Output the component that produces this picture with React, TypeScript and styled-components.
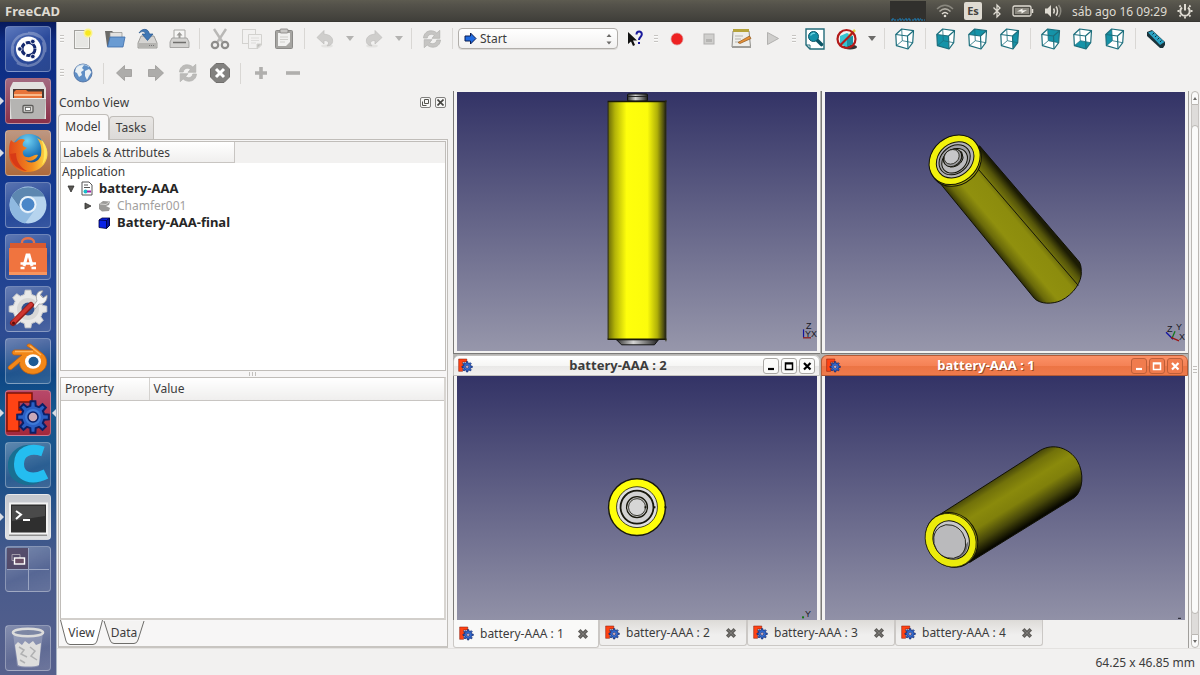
import React from "react";
import styled, { createGlobalStyle, css } from "styled-components";

const GlobalStyle = createGlobalStyle`
  * { box-sizing: border-box; }
  body {
    margin: 0;
    background: #f2f1f0;
    color: #3c3c3c;
    font-family: "Noto Sans", "Open Sans", sans-serif;
    font-size: 12px;
    line-height: 17px;
  }
  button, select { font: inherit; color: inherit; }
  svg { display: block; }
`;

const Page = styled.div`
  min-height: 100vh;
  display: flex;
  flex-direction: column;
`;

/* ---------- desktop bar ---------- */

const TopBar = styled.header`
  height: 22px;
  padding: 0 7px 0 5px;
  display: flex;
  align-items: center;
  gap: 10px;
  color: #dfdbd2;
  background: linear-gradient(#5d5b50, #55534b 20%, #403f3a 94%, #33322e);
`;

const AppName = styled.strong`
  flex: 1;
  font-size: 13px;
`;

const LoadGraph = styled.div`
  width: 36px;
  height: 20px;
  display: flex;
  align-items: flex-end;
  background: #31302d;
`;

const Keyboard = styled.span`
  width: 18px;
  height: 18px;
  border-radius: 2px;
  background: #dfdbd2;
  color: #45443f;
  font-size: 11px;
  font-weight: 700;
  text-align: center;
`;

/* ---------- launcher ---------- */

const Desktop = styled.div`
  flex: 1;
  display: flex;
`;

const Launcher = styled.nav`
  flex: none;
  width: 57px;
  padding: 4px 5px;
  display: flex;
  flex-direction: column;
  gap: 6px;
  border-right: 1px solid #a9b4c4;
  background: linear-gradient(#071a5c, #0d2c82 3%, #153b92 30%, #2e4c92 48%, #0d4684 54%, #17598f 60%, #1a4f88 70%, #475a8c 82%, #56608c);
`;

const Tile = styled.button<{ $tint?: string; $last?: boolean }>`
  position: relative;
  width: 46px;
  height: 46px;
  padding: 0;
  border: 1px solid rgba(255, 255, 255, 0.28);
  border-radius: 4px;
  background: ${(p) => p.$tint ?? "linear-gradient(160deg, rgba(255,255,255,0.3), rgba(255,255,255,0.08) 60%, rgba(255,255,255,0.14))"};
  ${(p) => p.$last && css`margin-top: auto;`}
  & > svg { margin: -1px; }
`;

const Pip = styled.i<{ $side: "left" | "right" }>`
  position: absolute;
  top: 18px;
  border: 4px solid transparent;
  ${(p) => (p.$side === "left"
    ? css`left: -6px; border-left-color: #d8dce4; border-right-width: 0;`
    : css`right: -6px; border-right-color: #d8dce4; border-left-width: 0;`)}
`;

/* ---------- toolbars ---------- */

const Main = styled.main`
  flex: 1;
  min-width: 0;
  display: flex;
  flex-direction: column;
`;

const Toolbar = styled.div<{ $height: number }>`
  height: ${(p) => p.$height}px;
  display: flex;
  align-items: center;
`;

const ToolButton = styled.button`
  flex: none;
  width: 32px;
  height: 30px;
  padding: 0;
  border: 0;
  background: none;
  display: grid;
  place-items: center;
`;

const MenuArrow = styled.button<{ $dim?: boolean }>`
  flex: none;
  width: 17px;
  height: 30px;
  padding: 0;
  border: 0;
  background: none;
  display: grid;
  place-items: center;
  &::after {
    content: "";
    border: 4px solid transparent;
    border-top: 5px solid ${(p) => (p.$dim ? "#b4b3b1" : "#6c6b69")};
    border-bottom-width: 0;
  }
`;

const Divider = styled.i`
  flex: none;
  width: 1px;
  height: 21px;
  margin: 0 4px;
  background: #d9d7d4;
`;

const Grip = styled.i`
  flex: none;
  width: 4px;
  height: 8px;
  margin: 0 3px;
  background: repeating-linear-gradient(#c6c4c1 0 1px, #fbfbfa 1px 2px, transparent 2px 3px);
`;

const Picker = styled.label`
  flex: none;
  width: 160px;
  height: 21px;
  margin: 0 1px;
  padding: 0 5px;
  display: flex;
  align-items: center;
  gap: 3px;
  border: 1px solid #b1aeaa;
  border-radius: 4px;
  background: linear-gradient(#ffffff, #f2f1f0);
  box-shadow: 0 1px 0 #dcdad7;
`;

const PickerSelect = styled.select`
  flex: 1;
  min-width: 0;
  padding: 0;
  border: 0;
  background: none;
  appearance: none;
`;

/* ---------- combo view ---------- */

const Workspace = styled.div`
  flex: 1;
  min-height: 0;
  display: flex;
`;

const Combo = styled.section`
  flex: none;
  width: 391px;
  padding-left: 1px;
  display: flex;
  flex-direction: column;
`;

const ComboHead = styled.header`
  height: 23px;
  padding: 0 2px 0 1px;
  display: flex;
  align-items: center;
  gap: 4px;
`;

const ComboTitle = styled.h1`
  flex: 1;
  margin: 0;
  font-size: 12px;
  font-weight: 400;
`;

const DockButton = styled.button`
  width: 11px;
  height: 11px;
  padding: 1px;
  border: 1px solid #82817f;
  border-radius: 2px;
  background: #f7f7f6;
`;

const PanelTabs = styled.div`
  height: 25px;
  display: flex;
  align-items: flex-end;
`;

const PanelTab = styled.button<{ $active?: boolean }>`
  width: ${(p) => (p.$active ? 51 : 45)}px;
  height: ${(p) => (p.$active ? 26 : 23)}px;
  padding: 0 1px 2px 0;
  border: 1px solid #c0bdb9;
  border-bottom: 0;
  border-radius: 4px 4px 0 0;
  background: ${(p) => (p.$active ? "#f9f8f8" : "linear-gradient(#e8e6e4, #dcdad8)")};
  position: relative;
  z-index: ${(p) => (p.$active ? 1 : 0)};
  margin-bottom: ${(p) => (p.$active ? -1 : 0)}px;
`;

const PanelFrame = styled.div`
  flex: 1;
  padding: 1px 1px 0;
  display: flex;
  flex-direction: column;
  border: 1px solid #c0bdb9;
  border-bottom: 2px solid #c8c5c1;
  background: #f7f6f6;
`;

const TreeBox = styled.div`
  flex: 230 1 0;
  border: 1px solid #c0bdb9;
  background: #ffffff;
`;

const HeaderStrip = styled.div`
  height: 21px;
  background: #f2f1f0;
`;

const TreeHeader = styled.div`
  width: 174px;
  height: 21px;
  padding: 2px;
  border-right: 1px solid #c8c5c2;
  border-bottom: 1px solid #c8c5c2;
  background: linear-gradient(#ffffff, #f0efee);
`;

const Tree = styled.ul`
  margin: 0;
  padding: 0 1px;
  list-style: none;
`;

const TreeRow = styled.li<{ $depth: number; $tone?: "bold" | "dim" }>`
  height: 17px;
  padding-left: ${(p) => (p.$depth === 0 ? 0 : p.$depth * 17 - 12)}px;
  display: flex;
  align-items: center;
  gap: 6px;
  font-size: ${(p) => (p.$tone === "bold" ? 13 : 12)}px;
  font-weight: ${(p) => (p.$tone === "bold" ? 700 : 400)};
  color: ${(p) => (p.$tone === "dim" ? "#a2a09e" : p.$tone === "bold" ? "#262626" : "#3c3c3c")};
`;

const Splitter = styled.div`
  height: 6px;
  display: grid;
  place-items: center;
  &::after {
    content: "";
    width: 8px;
    height: 4px;
    background: repeating-linear-gradient(90deg, #c2c0bd 0 1px, transparent 1px 3px);
  }
`;

const PropertyBox = styled.div`
  flex: 243 1 0;
  border: 1px solid #c0bdb9;
  border-right: 2px solid #d8d5d1;
  border-bottom: 2px solid #d2cfcb;
  background: #ffffff;
`;

const PropertyTable = styled.table`
  width: 100%;
  border-collapse: collapse;
  th {
    height: 23px;
    padding: 0 4px;
    border-bottom: 1px solid #c8c5c2;
    background: linear-gradient(#ffffff, #efeeed);
    font-weight: 400;
    text-align: left;
  }
  th:first-child {
    width: 88px;
    border-right: 1px solid #d4d2cf;
  }
`;

const FootTabs = styled.div`
  height: 26px;
  display: flex;
`;

const FootTab = styled.button<{ $width: number }>`
  width: ${(p) => p.$width}px;
  height: 25px;
  padding: 0 0 1px;
  border: 0;
  background: none;
  position: relative;
  & > svg { position: absolute; inset: 0; }
  & > span { position: relative; }
`;

/* ---------- document windows ---------- */

const Documents = styled.section`
  flex: 1;
  min-width: 0;
  margin-left: 5px;
  display: flex;
`;

const DocumentArea = styled.div`
  flex: 1;
  min-width: 0;
  display: flex;
  flex-direction: column;
`;

const WindowGrid = styled.div`
  flex: 1;
  display: grid;
  grid-template-columns: 1fr 1fr;
  grid-template-rows: minmax(0, 263fr) minmax(0, 265fr);
  column-gap: 1px;
  row-gap: 1px;
  background: #b5b4b2;
`;

const DocWindow = styled.article<{ $titled?: boolean }>`
  min-width: 0;
  display: flex;
  flex-direction: column;
  border: solid #7b7a78;
  border-width: 0 0 ${(p) => (p.$titled ? 0 : 1)}px 1px;
  border-radius: ${(p) => (p.$titled ? "6px 6px 0 0" : "0")};
  background: #f4f3f2;
  padding: ${(p) => (p.$titled ? "0" : "1px 0 2px")};
`;

const TitleBar = styled.header<{ $active?: boolean }>`
  flex: none;
  height: 21px;
  margin-left: -1px;
  padding: 0 4px;
  display: flex;
  align-items: center;
  gap: 2px;
  border: 1px solid ${(p) => (p.$active ? "#b45a35" : "#c4c2bf")};
  border-radius: 6px 6px 0 0;
  color: ${(p) => (p.$active ? "#ffffff" : "#3c3c3c")};
  text-shadow: ${(p) => (p.$active ? "1px 1px 0 #9c4a26" : "none")};
  background: ${(p) => (p.$active
    ? "linear-gradient(#fb9166, #f58256 50%, #ec7444 52%, #ee7a4c)"
    : "linear-gradient(#ffffff, #f6f6f5 50%, #e9e8e7 52%, #f2f1f0)")};
`;

const WindowTitle = styled.h2`
  flex: 1;
  margin: 0;
  font-size: 13px;
  font-weight: 700;
  text-align: center;
`;

const FrameButton = styled.button<{ $active?: boolean }>`
  width: 16px;
  height: 16px;
  padding: 0;
  display: grid;
  place-items: center;
  border: 1px solid ${(p) => (p.$active ? "#bd5f39" : "#aaa8a5")};
  border-radius: 3px;
  background: ${(p) => (p.$active ? "#f07c4e" : "#fbfbfa")};
  color: ${(p) => (p.$active ? "#ffffff" : "#000000")};
`;

const Viewport = styled.div`
  flex: 1 1 0px;
  min-height: 0;
  contain: size;
  margin: 0 3px;
  overflow: hidden;
  background: linear-gradient(#333366, #9797ab) 0 0 / 100% 260px no-repeat, #9797ab;
  & > svg { width: 100%; height: 260px; }
`;

const DocTabs = styled.div`
  height: 28px;
  display: flex;
  align-items: flex-start;
`;

const DocTab = styled.div<{ $active?: boolean }>`
  flex: none;
  width: ${(p) => (p.$active ? 146 : 148)}px;
  height: ${(p) => (p.$active ? 28 : 26)}px;
  padding: 0 9px 0 5px;
  display: flex;
  align-items: center;
  gap: 6px;
  border: 1px solid #cbc8c5;
  border-top: 0;
  border-radius: 0 0 3px 3px;
  background: ${(p) => (p.$active ? "#f9f9f8" : "linear-gradient(#dddbd8, #f0efee 60%)")};
`;

const DocTabName = styled.button`
  flex: 1;
  padding: 0;
  border: 0;
  background: none;
  text-align: left;
  white-space: nowrap;
`;

const CloseButton = styled.button`
  width: 12px;
  height: 12px;
  padding: 0;
  border: 0;
  background: none;
`;

const ScrollBar = styled.div`
  flex: none;
  width: 12px;
  padding: 0 1px 0 2px;
  display: flex;
  flex-direction: column;
  border-left: 1px solid #a09e9b;
  background: #f2f1f0;
`;

const ScrollStep = styled.button<{ $down?: boolean }>`
  height: 14px;
  padding: 0;
  display: grid;
  place-items: center;
  border: 1px solid #bab7b3;
  border-radius: ${(p) => (p.$down ? "0 0 5px 5px" : "5px 5px 0 0")};
  background: #fafafa;
  &::after {
    content: "";
    border: 2px solid transparent;
    border-${(p) => (p.$down ? "top" : "bottom")}: 3px solid #6c6b69;
    border-${(p) => (p.$down ? "bottom" : "top")}-width: 0;
  }
`;

const ScrollTrack = styled.div`
  flex: 1;
  padding: 20px 0;
  display: flex;
  border: solid #c6c3c0;
  border-width: 0 1px;
  background: #dedcda;
`;

const ScrollThumb = styled.div`
  flex: 1;
  margin: 0 -1px;
  display: grid;
  place-items: center;
  border: 1px solid #bab7b3;
  border-radius: 5px;
  background: #fafaf9;
  &::after {
    content: "";
    width: 4px;
    height: 8px;
    background: repeating-linear-gradient(#c2c0bd 0 1px, transparent 1px 3px);
  }
`;

const StatusBar = styled.footer`
  height: 27px;
  padding: 5px 5px 0 0;
  border-top: 1px solid #e4e2e0;
  text-align: right;
`;

/* ---------- shared drawings ---------- */

function gear(cx: number, cy: number, outer: number, inner: number, teeth: number) {
  const pts: string[] = [];
  const step = (Math.PI * 2) / teeth;
  for (let i = 0; i < teeth; i++) {
    const a = i * step - Math.PI / 2;
    [[-0.3, inner], [-0.19, outer], [0.19, outer], [0.3, inner]].forEach(([f, r]) => {
      pts.push(`${(cx + r * Math.cos(a + f * step)).toFixed(2)} ${(cy + r * Math.sin(a + f * step)).toFixed(2)}`);
    });
  }
  return `M${pts.join("L")}Z`;
}

const FreeCadMark = ({ size }: { size: number }) => (
  <svg width={size} height={size} viewBox="0 0 46 46">
    <path d="M2 3H27V12H14V20H22V28H14V41H2Z" fill="#ff4314" stroke="#7c1408" strokeWidth="1.5" />
    <path d={gear(28, 27, 16, 11.5, 8)} fill="#2a5fc4" stroke="#0b1f66" strokeWidth="2" />
    <circle cx="28" cy="27" r="8" fill="#3f7ad8" />
    <circle cx="28" cy="27" r="5" fill="#c9a9b8" stroke="#0b1f66" strokeWidth="1.5" />
  </svg>
);

const CROSS = (
  <svg width="12" height="12" viewBox="0 0 12 12">
    <path d="M2.2 2.2L9.8 9.8M9.8 2.2L2.2 9.8" stroke="#62605d" strokeWidth="3.6" />
    <path d="M3 3L9 9M9 3L3 9" stroke="#7b7976" strokeWidth="1" />
  </svg>
);

const VERT: Record<string, [number, number]> = {
  a: [6.7, 1], b: [18.5, 2.7], c: [12.5, 8], d: [0.8, 6.5],
  e: [7.3, 12.7], f: [17.7, 14.7], g: [13, 21], h: [1.4, 17.7],
};
const face = (keys: string) => keys.split("").map((k) => VERT[k].join(",")).join(" ");

const Cube = ({ fill }: { fill?: string }) => (
  <svg width="20" height="22" viewBox="0 0 20 22" fill="none" stroke="#1d6f7d" strokeLinejoin="round">
    <polygon points="6.7,1 18.5,2.7 17.7,14.7 13,21 1.4,17.7 0.8,6.5" fill="#ffffff" stroke="none" />
    {fill && <polygon points={face(fill)} fill="#1593a8" stroke="none" />}
    <path d="M6.7 1L7.3 12.7L17.7 14.7M7.3 12.7L1.4 17.7" strokeWidth="0.8" />
    <polygon points={face("abfghd")} strokeWidth="1.2" />
    <path d="M0.8 6.5L12.5 8L18.5 2.7M12.5 8L13 21" strokeWidth="1.2" />
  </svg>
);

const Swirl = ({ tone }: { tone: string }) => (
  <svg width="20" height="20" viewBox="0 0 20 20" fill={tone} stroke="#b2b1af" strokeWidth="0.7">
    <path d="M1.5 9C1.8 4.500 5 1.800 9 1.800C11.500 1.800 13.300 2.600 14.800 4L17.800 1.300V9.300H10L12.400 6.400C10 4.400 6 5 5.200 9Z" />
    <path d="M18.500 11C18.200 15.500 15 18.200 11 18.200C8.500 18.200 6.700 17.400 5.200 16L2.200 18.700V10.700H10L7.600 13.600C10 15.600 14 15 14.800 11Z" />
  </svg>
);

const BentArrow = ({ flip }: { flip?: boolean }) => (
  <svg width="20" height="20" viewBox="0 0 20 20">
    <g transform={flip ? "translate(20 0) scale(-1 1)" : undefined}>
      <ellipse cx="12" cy="17" rx="6" ry="1.6" fill="#e4e3e1" />
      <path d="M2 8.500L9 1.500V5.200C15 5.400 18 8.600 17.600 12.500C17.300 15.200 15.200 16.900 12 16.800C14.800 14.400 13.600 11.200 9 11.600V15Z" fill="#cfcecc" stroke="#bebdbb" strokeWidth="0.7" />
    </g>
  </svg>
);

const NavArrow = ({ flip }: { flip?: boolean }) => (
  <svg width="18" height="18" viewBox="0 0 18 18">
    <path transform={flip ? "translate(18 0) scale(-1 1)" : undefined} d="M1.500 9L9.500 1.500V5.500H16.500V12.500H9.500V16.500Z" fill="#adacaa" stroke="#9a9997" strokeWidth="0.8" />
  </svg>
);

/* ---------- battery models ---------- */

const AxisLabel = styled.text`
  font-family: "Liberation Sans", sans-serif;
  font-size: 9px;
  fill: #17171f;
`;

const Scene = ({ children }: { children: React.ReactNode }) => (
  <svg viewBox="0 0 361 260" preserveAspectRatio="xMidYMin meet">{children}</svg>
);

const FrontView = () => (
  <Scene>
    <defs>
      <linearGradient id="front-body">
        <stop offset="0" stopColor="#6a6a08" />
        <stop offset="0.12" stopColor="#b4b408" />
        <stop offset="0.32" stopColor="#ffff0c" />
        <stop offset="0.68" stopColor="#fcfc0c" />
        <stop offset="0.85" stopColor="#b0b008" />
        <stop offset="0.96" stopColor="#4c4c10" />
        <stop offset="1" stopColor="#1c1c14" />
      </linearGradient>
      <linearGradient id="front-metal">
        <stop offset="0" stopColor="#303030" />
        <stop offset="0.4" stopColor="#d4d4d4" />
        <stop offset="1" stopColor="#202020" />
      </linearGradient>
    </defs>
    <rect x="171" y="2" width="20" height="7" rx="1" fill="url(#front-metal)" stroke="#111" />
    <path d="M171 4.5H191" stroke="#222" />
    <path d="M160 248.500H202L198 253.500H165Z" fill="url(#front-metal)" stroke="#111" />
    <rect x="151.500" y="9.500" width="58" height="239" rx="1" fill="url(#front-body)" />
    <path d="M151 9.500H210M151 248H210" stroke="#1a1a08" strokeWidth="1.6" />
    <path d="M151.500 10V248M209.500 8V250" stroke="#2c2c10" />
    <path d="M347.500 238V246" stroke="#1414a0" strokeWidth="1.2" />
    <path d="M347 246.500H355" stroke="#8c1414" strokeWidth="1.2" />
    <AxisLabel x="350" y="238">Z</AxisLabel>
    <AxisLabel x="349" y="246">Y</AxisLabel>
    <AxisLabel x="355" y="246">X</AxisLabel>
  </Scene>
);

const TiltedTopView = () => (
  <Scene>
    <defs>
      <linearGradient id="tilt-body" gradientUnits="userSpaceOnUse" x1="163" y1="151" x2="205" y2="116">
        <stop offset="0" stopColor="#2a2a05" />
        <stop offset="0.14" stopColor="#6a6a0a" />
        <stop offset="0.32" stopColor="#90900e" />
        <stop offset="0.66" stopColor="#8c8c0d" />
        <stop offset="0.87" stopColor="#55550a" />
        <stop offset="1" stopColor="#1c1c04" />
      </linearGradient>
    </defs>
    <path d="M115 91L210 207C216 213 228 213 237 209C249 203 258 190 257 180C257 174 256 171 253 168L155 54Z" fill="url(#tilt-body)" stroke="#111106" />
    <path d="M152.500 76L254 194" stroke="#15150a" />
    <g stroke="#111106">
      <ellipse cx="131" cy="69.500" rx="27.300" ry="23.400" transform="rotate(-40 131 69.500)" fill="#a4a40a" />
      <ellipse cx="130" cy="68" rx="27.300" ry="23" transform="rotate(-40 130 68)" fill="#f2f20c" />
      <ellipse cx="130.500" cy="68" rx="20.300" ry="16.500" transform="rotate(-40 130.500 68)" fill="#b4b4b6" />
      <ellipse cx="130" cy="68" rx="17" ry="13.500" transform="rotate(-40 130 68)" fill="#a0a0a4" />
      <ellipse cx="130" cy="69" rx="14" ry="11" transform="rotate(-40 130 69)" fill="#bcbcbe" />
      <path d="M119.500 68L122 73C126 78 137 74 138.500 66L137 60Z" fill="#77777b" />
      <ellipse cx="128" cy="66" rx="10" ry="8" transform="rotate(-40 128 66)" fill="#9a9a9d" />
      <ellipse cx="127" cy="65" rx="8" ry="6.800" transform="rotate(-40 127 65)" fill="#c6c6c8" strokeWidth="0.7" />
    </g>
    <path d="M342 241L349 248" stroke="#1414a0" strokeWidth="1.3" />
    <path d="M348 247L351 240" stroke="#14781e" strokeWidth="1.3" />
    <path d="M347 246L355 249.500" stroke="#9c1414" strokeWidth="1.3" />
    <AxisLabel x="343" y="241">Z</AxisLabel>
    <AxisLabel x="352" y="239">Y</AxisLabel>
    <AxisLabel x="355" y="249">X</AxisLabel>
  </Scene>
);

const PoleView = () => (
  <Scene>
    <g stroke="#17170c">
      <circle cx="180.500" cy="131.500" r="28.500" fill="#ffff0a" strokeWidth="1.4" />
      <circle cx="180.500" cy="131.500" r="20.500" fill="#e0e0e0" strokeWidth="0.8" />
      <circle cx="180.500" cy="131.500" r="16.500" fill="#d2d2d2" strokeWidth="1.8" />
      <circle cx="180.500" cy="131.500" r="10.500" fill="#c2c2c2" strokeWidth="1.2" />
      <circle cx="180.500" cy="131.500" r="8.500" fill="#d6d6d6" strokeWidth="0.8" />
      <path d="M188 131.500H190M197 131.500H199M208 131.500H210" strokeWidth="2" />
    </g>
    <rect x="346" y="241" width="2" height="2" fill="#147814" />
    <AxisLabel x="349" y="242">Y</AxisLabel>
  </Scene>
);

const TiltedBaseView = () => (
  <Scene>
    <defs>
      <linearGradient id="base-body" gradientUnits="userSpaceOnUse" x1="167" y1="105" x2="197" y2="153">
        <stop offset="0" stopColor="#44440a" />
        <stop offset="0.14" stopColor="#72720a" />
        <stop offset="0.36" stopColor="#8a8a0c" />
        <stop offset="0.58" stopColor="#80800b" />
        <stop offset="0.8" stopColor="#48480a" />
        <stop offset="1" stopColor="#080800" />
      </linearGradient>
    </defs>
    <path d="M115 139L216 74.500C229 67 245 72 253 85C260 97 259 115 250 122L145 187Z" fill="url(#base-body)" stroke="#111106" />
    <g stroke="#111106">
      <ellipse cx="127" cy="164.300" rx="28.300" ry="25.300" transform="rotate(57 127 164.300)" fill="#8c8c0a" />
      <ellipse cx="126" cy="164.700" rx="27.800" ry="24.600" transform="rotate(57 126 164.700)" fill="#ebeb0b" strokeWidth="0.7" />
      <ellipse cx="126.500" cy="164.500" rx="20" ry="17.500" transform="rotate(57 126.500 164.500)" fill="#c8c8ca" />
      <path d="M125 184C136 185 144 177 143.500 166L139 172Z" fill="#707074" stroke="none" />
      <ellipse cx="125" cy="166" rx="17.500" ry="15.500" transform="rotate(57 125 166)" fill="#bababc" strokeWidth="0.8" />
    </g>
    <path d="M354 243H357" stroke="#17171f" />
  </Scene>
);

/* ---------- launcher artwork ---------- */

const art = {
  ubuntu: (
    <svg width="46" height="46" viewBox="0 0 46 46" fill="none">
      <path d="M8 30C3 12 20 2 35 11M38 16C44 32 28 46 12 37M23 7C34 6 42 14 40 26M22 39C12 39 6 30 8 20" stroke="#ffffff" strokeOpacity="0.28" strokeWidth="2.5" />
      <circle cx="23.500" cy="23" r="12.500" fill="#ffffff" />
      <circle cx="23.500" cy="23" r="6.500" stroke="#15296e" strokeWidth="3" strokeDasharray="12.200 1.400" />
      <g fill="#15296e" stroke="#ffffff" strokeWidth="0.8">
        <circle cx="14.800" cy="23" r="2.300" /><circle cx="27.800" cy="15.500" r="2.300" /><circle cx="27.800" cy="30.500" r="2.300" />
      </g>
    </svg>
  ),
  files: (
    <svg width="46" height="46" viewBox="0 0 46 46">
      <path d="M8 4H38L41 10V41H5V10Z" fill="#e2e1df" />
      <rect x="8" y="11" width="31" height="10" fill="#4a3a34" />
      <path d="M9 14L11 12H21L23 13.500H37V21H9Z" fill="#e8743a" />
      <path d="M9 17H37" stroke="#ffd2a8" strokeWidth="1.500" />
      <path d="M5 20H41L39.500 41H6.500Z" fill="#b5b4b2" />
      <path d="M5 20.500H41" stroke="#efefee" />
      <rect x="18" y="27.500" width="10" height="7" rx="1" fill="#d4d3d1" stroke="#5d5c5a" strokeWidth="1.300" />
      <rect x="20.500" y="29.500" width="5" height="3" fill="#ffffff" stroke="#5d5c5a" strokeWidth="0.800" />
    </svg>
  ),
  firefox: (
    <svg width="46" height="46" viewBox="0 0 46 46">
      <defs>
        <radialGradient id="ff-globe" cx="0.45" cy="0.2" r="0.8"><stop offset="0" stopColor="#6fd0f2" /><stop offset="0.6" stopColor="#1b74b8" /><stop offset="1" stopColor="#133c7c" /></radialGradient>
        <linearGradient id="ff-tail" x1="0" x2="1"><stop offset="0" stopColor="#e2471a" /><stop offset="0.6" stopColor="#f28c1e" /><stop offset="1" stopColor="#ffdf4a" /></linearGradient>
      </defs>
      <circle cx="24" cy="21" r="17" fill="url(#ff-globe)" />
      <path d="M6 10C8 12 9 13 11 12C14 9 17 8 20 10C18 12 17 14 18 16L22 18L18 21C17 25 20 28 25 27C29 26 30 24 33 25C31 30 25 32 20 30C26 35 34 32 36 25C37 19 36 13 32 8C40 11 44 20 42 28C39 38 31 42 22 42C12 42 4 34 4 24C4 18 4 14 6 10Z" fill="url(#ff-tail)" />
      <path d="M36 9C43 16 44 27 37 35C40 28 40 18 36 9Z" fill="#ffe763" />
      <path d="M5 24C6 34 13 40 22 41C15 37 11 31 11 23Z" fill="#d83a16" />
    </svg>
  ),
  chromium: (
    <svg width="46" height="46" viewBox="0 0 46 46">
      <circle cx="23" cy="23" r="18.500" fill="#b6d4ee" />
      <path d="M6.500 14.500C13 2.500 33 2 39.500 14.500H23C17 14.500 14 19 14.800 26Z" fill="#5d87b0" />
      <path d="M6.500 14.500C2 24 6 38 20 41.500L30.500 27C27 33 18 33 15 26Z" fill="#8fb9e0" />
      <circle cx="23" cy="22.500" r="8.500" fill="#e9f2fa" />
      <circle cx="23" cy="22.500" r="6.500" fill="#4a86c8" />
    </svg>
  ),
  software: (
    <svg width="46" height="46" viewBox="0 0 46 46" fill="none">
      <path d="M17 12V8C17 3 29 3 29 8V12" stroke="#e5714a" strokeWidth="2.400" />
      <path d="M5 9H41V15H5Z" fill="#d85a30" />
      <path d="M4 14H42V41H4Z" fill="#f0743f" />
      <path d="M4 38H42V41H4Z" fill="#f8955f" />
      <path d="M19 32L22 21H24L27 32" stroke="#ffffff" strokeWidth="3" />
      <path d="M15.500 29.500H31M15.500 34H19.500M26.500 34H31" stroke="#ffffff" strokeWidth="2.400" />
    </svg>
  ),
  settings: (
    <svg width="46" height="46" viewBox="0 0 46 46">
      <path d={gear(23, 23, 19, 15, 8)} fill="#e9e9e8" stroke="#cfcfce" />
      <circle cx="23" cy="23" r="11" fill="#d7d7d6" />
      <circle cx="23" cy="23" r="6.500" fill="#33538f" />
      <path d="M28 20L32 15C30 9 33 4 38 5L35 9L38 12L42 9C43 15 38 19 34 18L30 23Z" fill="#f4f4f4" stroke="#9e9e9e" strokeWidth="0.800" />
      <path d="M8 37L26 19" stroke="#8e1a17" strokeWidth="6" strokeLinecap="round" />
      <path d="M8 36.500L26 18.500" stroke="#cf3530" strokeWidth="3.800" strokeLinecap="round" />
      <circle cx="8.500" cy="37" r="1.500" fill="#5a0e0c" />
    </svg>
  ),
  blender: (
    <svg width="46" height="46" viewBox="0 0 46 46">
      <path d="M22 7C24 5 26 6 28 8L38 16C43 20 43 29 37 33C31 38 20 37 16 30C15 28 14 26 15 24L7 31C4 33 2 30 4 28L17 17H9C6 16 7 12 10 12H28L22 8Z" fill="#f28718" stroke="#c4610a" strokeWidth="0.800" />
      <path d="M25 8L36 17M10 13.500H28" stroke="#ffb65c" strokeWidth="1.500" />
      <ellipse cx="28" cy="23.500" rx="8" ry="7.300" fill="#ffffff" />
      <ellipse cx="28.500" cy="23.500" rx="5" ry="4.700" fill="#1c5a94" />
    </svg>
  ),
  cura: (
    <svg width="46" height="46" viewBox="0 0 46 46" fill="none">
      <path d="M34 7.500C17 2 5 12 6 25C7 38 20 43 33 38" stroke="#196f92" strokeWidth="6" />
      <path d="M38 9.500C25 5 14 10 14 22C14 35 27 39 41 32" stroke="#24bdf0" strokeWidth="10" />
    </svg>
  ),
  terminal: (
    <svg width="46" height="46" viewBox="0 0 46 46" fill="none">
      <rect x="4" y="10" width="38" height="32" fill="#8f8f8f" />
      <rect x="5" y="9.500" width="37" height="30" fill="#2f2f2f" stroke="#f3f3f3" strokeWidth="2" />
      <path d="M7 12H40V22L7 27Z" fill="#4a4a4a" />
      <path d="M11 17L16 20.500L11 25M18 26H25" stroke="#ffffff" strokeWidth="2" />
    </svg>
  ),
  workspaces: (
    <svg width="46" height="46" viewBox="0 0 46 46" fill="none">
      <rect x="2" y="2" width="21" height="21" fill="#4c3c58" fillOpacity="0.75" />
      <path d="M23.500 2V44M2 23.500H44" stroke="#9aa5c2" />
      <path d="M7 8.500H15V14.500H7Z" stroke="#a39cab" />
      <rect x="9.500" y="12" width="10" height="6" fill="#6a4f66" stroke="#ffffff" strokeWidth="1.400" />
    </svg>
  ),
  trash: (
    <svg width="46" height="46" viewBox="0 0 46 46">
      <path d="M8 8L12 41C16 43 31 43 34 41L38 8Z" fill="#ffffff" fillOpacity="0.22" />
      <path d="M10 20L13 17L17 20L20 16L24 19L28 16L31 20L36 18L34 40C30 42 16 42 13 40Z" fill="#dededd" />
      <path d="M14 22L19 25L16 29L22 32M25 22L30 26L26 31L32 35M15 35L20 38" stroke="#b0b1b2" strokeWidth="1.500" fill="none" />
      <ellipse cx="23" cy="7.500" rx="15" ry="3.800" fill="#7d87a4" stroke="#dcdcdb" strokeWidth="2.600" />
    </svg>
  ),
};

type App = { name: string; icon: React.ReactNode; tint?: string; left?: boolean; right?: boolean };

const APPS: App[] = [
  { name: "Dash", icon: art.ubuntu, tint: "linear-gradient(150deg, #5d79bd, #2b4a9b 50%, #2a478f)" },
  { name: "Files", icon: art.files, tint: "linear-gradient(#a36a80, #8a3048)", left: true },
  { name: "Firefox", icon: art.firefox, tint: "linear-gradient(#bd9782, #ad6a3c)", left: true },
  { name: "Chromium", icon: art.chromium },
  { name: "Software Center", icon: art.software },
  { name: "Settings", icon: art.settings },
  { name: "Blender", icon: art.blender },
  { name: "FreeCAD", icon: <FreeCadMark size={46} />, tint: "linear-gradient(#b8486a, #a3283c)", left: true, right: true },
  { name: "Cura", icon: art.cura },
  { name: "Terminal", icon: art.terminal, tint: "linear-gradient(#c4c7cd, #dfe0e2)", left: true },
  { name: "Workspaces", icon: art.workspaces },
];

/* ---------- toolbar artwork ---------- */

const tool = {
  create: (
    <svg width="20" height="22" viewBox="0 0 20 22">
      <rect x="1.500" y="2.500" width="15" height="18" fill="#f2f2f0" stroke="#a3a29e" />
      <rect x="3" y="4" width="12" height="15" fill="#e6e6e3" />
      <circle cx="15" cy="5" r="4.500" fill="#fbf38a" /><circle cx="15" cy="5" r="2.800" fill="#f7e81e" />
    </svg>
  ),
  open: (
    <svg width="22" height="20" viewBox="0 0 22 20">
      <path d="M1 2H8L10 4H18V17H3Z" fill="#6b6a67" />
      <path d="M6 3.500H18V12H6Z" fill="#e3e2e0" stroke="#8d8c89" strokeWidth="0.700" />
      <path d="M6 8H21L19 18H3.500Z" fill="#6a9bd2" stroke="#3c6ca8" strokeWidth="0.800" />
    </svg>
  ),
  save: (
    <svg width="21" height="21" viewBox="0 0 21 21">
      <path d="M4 8H17L20 15V20H1V15Z" fill="#d5d4d2" stroke="#8b8a87" strokeWidth="0.800" />
      <path d="M1.500 15H19.500V19.500H1.500Z" fill="#b5b4b1" />
      <path d="M12 17.500H18" stroke="#777" strokeDasharray="1 1" />
      <path d="M2 5C4 1 11 -1 12.500 6H16L10.500 12.500L5 6H8.500C8 3 5 3 2 5Z" fill="#3f77b5" stroke="#27568c" strokeWidth="0.700" />
    </svg>
  ),
  print: (
    <svg width="21" height="20" viewBox="0 0 21 20">
      <path d="M5 1H16V10H5Z" fill="#f6f6f5" stroke="#a8a7a4" />
      <path d="M10.500 3L13.500 6.500H11.500V9H9.500V6.500H7.500Z" fill="#9b9a97" />
      <path d="M3 9H18L20 13V18.500H1V13Z" fill="#d3d2d0" stroke="#989794" strokeWidth="0.800" />
      <path d="M4 13.500H17" stroke="#6f6e6c" strokeWidth="1.500" />
    </svg>
  ),
  cut: (
    <svg width="20" height="22" viewBox="0 0 20 22" fill="none">
      <path d="M4 1L12.500 14M16 1L7.500 14" stroke="#b9b8b6" strokeWidth="2.400" />
      <circle cx="5" cy="17" r="3.200" stroke="#8e8d8b" strokeWidth="2.200" />
      <circle cx="15" cy="17" r="3.200" stroke="#8e8d8b" strokeWidth="2.200" />
    </svg>
  ),
  copy: (
    <svg width="22" height="22" viewBox="0 0 22 22" fill="#f2f1f0" stroke="#d3d2cf">
      <rect x="1.500" y="1.500" width="13" height="14" />
      <path d="M7.500 6.500H20.500V17L17 20.500H7.500Z" />
      <path d="M10 10H18M10 12.500H18M10 15H15" stroke="#dddcda" />
      <path d="M20.500 16L16 20.500V16Z" fill="#bdbcb9" />
    </svg>
  ),
  paste: (
    <svg width="20" height="22" viewBox="0 0 20 22">
      <rect x="1.500" y="2.500" width="17" height="18" rx="1" fill="#a5a4a1" stroke="#8b8a88" />
      <rect x="4" y="5" width="12" height="13" fill="#f1f1f0" />
      <rect x="6" y="1" width="8" height="4" rx="1" fill="#c8c7c5" stroke="#83827f" strokeWidth="0.800" />
      <path d="M6 9H14M6 11.500H14M6 14H11" stroke="#cfcecb" />
      <path d="M16 14L12 18H16Z" fill="#a9a8a5" />
    </svg>
  ),
  help: (
    <svg width="18" height="18" viewBox="0 0 18 18" fill="none">
      <path d="M2 2V14L5 11.500L7 16L9 15L7 10.500H11Z" fill="#111111" />
      <path d="M10.500 4.500C10.500 0.500 16 0.500 15.800 4.500C15.700 7 13 7 13 10M13 12V14" stroke="#1a1a9c" strokeWidth="2" />
    </svg>
  ),
  record: <svg width="14" height="14" viewBox="0 0 14 14"><circle cx="7" cy="7" r="6" fill="#ee2222" stroke="#d99" strokeWidth="0.700" /></svg>,
  stop: <svg width="12" height="12" viewBox="0 0 12 12"><rect x="1" y="1" width="10" height="10" fill="#d0cfcd" stroke="#b2b1af" /><rect x="3" y="6" width="6" height="3" fill="#b5b4b2" /></svg>,
  edit: (
    <svg width="21" height="21" viewBox="0 0 21 21">
      <path d="M2 3H18L19.500 19H1Z" fill="#eeeeea" stroke="#8b8a85" />
      <path d="M2 1H18V4H2Z" fill="#b6a43c" />
      <path d="M4 8H12M4 11H10M4 14H9" stroke="#b5b4b0" />
      <path d="M1 18H20V20H1Z" fill="#9e9d99" />
      <path d="M7 14.500L18.500 8L20 10.500L9 15.500Z" fill="#e8923a" stroke="#8f5416" strokeWidth="0.700" />
    </svg>
  ),
  play: <svg width="14" height="15" viewBox="0 0 14 15"><path d="M1.500 1.500L12.500 7.500L1.500 13.500Z" fill="#cfcecc" stroke="#b2b1af" /></svg>,
  fit: (
    <svg width="20" height="22" viewBox="0 0 20 22" fill="none">
      <path d="M1 1H19V21H5L1 17Z" fill="#ffffff" stroke="#236c7a" strokeWidth="1.400" />
      <path d="M1 17H5V21" stroke="#236c7a" />
      <path d="M11 11L16.500 16.500" stroke="#0d5566" strokeWidth="3.600" strokeLinecap="round" />
      <circle cx="8.500" cy="8.500" r="5" fill="#1590a8" stroke="#0d5566" />
      <path d="M5.500 7.500C6.500 5.500 8.500 5 10 5.500" stroke="#6cd0e0" strokeWidth="1.300" />
    </svg>
  ),
  style: (
    <svg width="22" height="22" viewBox="0 0 22 22" fill="none">
      <ellipse cx="14" cy="19" rx="7" ry="2.500" fill="#333333" />
      <path d="M4 8L11 5L17 8V16L10 19L4 16Z" fill="#36c3d2" />
      <path d="M11 10L17 8V16L11 19Z" fill="#1b93a5" />
      <path d="M13 8L19 2" stroke="#e4d23c" strokeWidth="2.500" />
      <circle cx="10.500" cy="11" r="9" stroke="#b31a1a" strokeWidth="2.200" />
      <path d="M4.500 5L16.500 17" stroke="#b31a1a" strokeWidth="2.200" transform="translate(21 0) scale(-1 1)" />
    </svg>
  ),
  ruler: (
    <svg width="20" height="20" viewBox="0 0 20 20">
      <path d="M1 3L6 1L19 13V16L17 19H14L1 7Z" fill="#1a323a" />
      <path d="M2 3.500L6.500 2L18.500 13L14 16Z" fill="#2ba3c4" />
      <path d="M8 4L6.500 5.500M10.500 6.500L9 8M13 9L11.500 10.500M15.500 11.500L14 13" stroke="#0c2c38" strokeWidth="1" />
    </svg>
  ),
  globe: (
    <svg width="20" height="20" viewBox="0 0 20 20">
      <circle cx="10" cy="10" r="9" fill="#5f8fc6" stroke="#46689a" strokeWidth="0.800" />
      <path d="M3 5C5 2 9 1.500 11 2L9 5L11 7L8 9L9 12L6 14L4 10L2 9ZM12 8L16 6L18.500 9L16 13L14 17L12 13Z" fill="#e9f0f4" />
      <path d="M4 4C7 1 13 1 16 4" stroke="#b4cfea" fill="none" />
    </svg>
  ),
  halt: (
    <svg width="22" height="22" viewBox="0 0 22 22">
      <path d="M7 1.500H15L20.500 7V15L15 20.500H7L1.500 15V7Z" fill="#82817f" stroke="#716f6d" />
      <path d="M7 7L15 15M15 7L7 15" stroke="#ffffff" strokeWidth="3" />
    </svg>
  ),
  plus: <svg width="14" height="14" viewBox="0 0 14 14"><path d="M7 1V13M1 7H13" stroke="#b0afad" strokeWidth="3.600" /></svg>,
  minus: <svg width="16" height="14" viewBox="0 0 16 14"><path d="M1 7H15" stroke="#b0afad" strokeWidth="3.600" /></svg>,
};

const Tool = ({ label, children }: { label: string; children: React.ReactNode }) => (
  <ToolButton aria-label={label}>{children}</ToolButton>
);

const FRAME_SHAPES: Record<string, string> = {
  Minimize: "M2 8H8",
  Maximize: "M1.500 2H8.500V8.500H1.500ZM1.500 2.800H8.500",
  Close: "M2 2L8.500 8.500M8.500 2L2 8.500",
};

const TitledWindow = ({ title, active, children }: { title: string; active?: boolean; children: React.ReactNode }) => (
  <DocWindow $titled>
    <TitleBar $active={active}>
      <FreeCadMark size={15} />
      <WindowTitle>{title}</WindowTitle>
      {Object.entries(FRAME_SHAPES).map(([name, d]) => (
        <FrameButton key={name} $active={active} aria-label={name}>
          <svg width="10" height="10" viewBox="0 0 10 10" fill="none" stroke="currentColor" strokeWidth={name === "Maximize" ? 1.5 : 2.2}>
            <path d={d} />
          </svg>
        </FrameButton>
      ))}
    </TitleBar>
    <Viewport>{children}</Viewport>
  </DocWindow>
);

const Indicators = () => (
  <>
    <LoadGraph>
      <svg width="36" height="4" viewBox="0 0 36 4"><path d="M1 3H35M2 2H5M9 2H13M15 2H20M24 2H31" stroke="#1a86c8" strokeWidth="1" strokeDasharray="2 1" /></svg>
    </LoadGraph>
    <svg width="18" height="14" viewBox="0 0 18 14" fill="none" strokeWidth="1.500">
      <path d="M1 5C6 0 12 0 17 5" stroke="#8a887f" />
      <path d="M3.500 7.500C7 4 11 4 14.500 7.500" stroke="#aeaba2" />
      <path d="M6 10C8 8 10 8 12 10" stroke="#dfdbd2" />
      <circle cx="9" cy="12" r="1.300" fill="#dfdbd2" />
    </svg>
    <Keyboard>Es</Keyboard>
    <svg width="10" height="16" viewBox="0 0 10 16" fill="none" stroke="#dfdbd2" strokeWidth="1.300"><path d="M1.500 4.500L8 11L5 14V2L8 5L1.500 11.500" /></svg>
    <svg width="22" height="12" viewBox="0 0 22 12" fill="none">
      <rect x="1" y="1" width="18" height="10" rx="1.500" stroke="#dfdbd2" strokeWidth="1.300" />
      <rect x="3" y="3" width="14" height="6" fill="#8b887f" />
      <path d="M20.500 4V8" stroke="#dfdbd2" strokeWidth="1.500" />
      <path d="M5 6.500L10.500 3.500V5.500L15 5L9.500 8.500V6.500Z" fill="#f5f3ee" />
    </svg>
    <svg width="18" height="16" viewBox="0 0 18 16" fill="none" strokeWidth="1.500">
      <path d="M1 5.500H3.500L7 2V14L3.500 10.500H1Z" fill="#dfdbd2" />
      <path d="M9.500 5.500C10.500 7 10.500 9 9.500 10.500M12 3.500C14 6 14 10 12 12.500" stroke="#dfdbd2" />
      <path d="M14.500 2C17.500 5.500 17.500 10.500 14.500 14" stroke="#8a887f" />
    </svg>
    <time>sáb ago 16 09:29</time>
    <svg width="16" height="16" viewBox="0 0 16 16" fill="none" stroke="#dfdbd2">
      <path d="M5 4.500A4.700 4.700 0 1 0 11 4.500" strokeWidth="2" />
      <path d="M8 1V7.500" strokeWidth="2" />
      <path d="M3.800 3.800L2.500 2.500M12.200 3.800L13.500 2.500M2.500 8H0.500M13.500 8H15.500M3.800 12.200L2.500 13.500M12.200 12.200L13.500 13.500M8 13.500V15.500" strokeWidth="1.800" />
    </svg>
  </>
);

export default function App() {
  return (
    <Page>
      <GlobalStyle />
      <TopBar>
        <AppName>FreeCAD</AppName>
        <Indicators />
      </TopBar>
      <Desktop>
        <Launcher aria-label="Launcher">
          {APPS.map((app) => (
            <Tile key={app.name} aria-label={app.name} $tint={app.tint}>
              {app.icon}
              {app.left && <Pip $side="left" />}
              {app.right && <Pip $side="right" />}
            </Tile>
          ))}
          <Tile aria-label="Trash" $last>{art.trash}</Tile>
        </Launcher>
        <Main>
          <Toolbar $height={33} role="toolbar" aria-label="File and view">
            <Grip />
            <Tool label="New">{tool.create}</Tool>
            <Tool label="Open">{tool.open}</Tool>
            <Tool label="Save">{tool.save}</Tool>
            <Tool label="Print">{tool.print}</Tool>
            <Divider />
            <Tool label="Cut">{tool.cut}</Tool>
            <Tool label="Copy">{tool.copy}</Tool>
            <Tool label="Paste">{tool.paste}</Tool>
            <Divider />
            <Tool label="Undo"><BentArrow /></Tool>
            <MenuArrow $dim aria-label="Undo history" />
            <Tool label="Redo"><BentArrow flip /></Tool>
            <MenuArrow $dim aria-label="Redo history" />
            <Divider />
            <Tool label="Refresh"><Swirl tone="#c6c5c3" /></Tool>
            <Divider />
            <Picker>
              <svg width="13" height="13" viewBox="0 0 13 13"><path d="M1 4H6.500V1L12 6.500L6.500 12V9H1Z" fill="#1f6ae0" stroke="#0a1c50" /></svg>
              <PickerSelect aria-label="Workbench" defaultValue="Start">
                <option>Start</option>
              </PickerSelect>
              <svg width="6" height="12" viewBox="0 0 6 12" fill="#6c6b69"><path d="M0.500 4L3 1L5.500 4ZM0.500 8.500L3 11.500L5.500 8.500Z" /></svg>
            </Picker>
            <Tool label="What's this?">{tool.help}</Tool>
            <Grip />
            <Tool label="Record macro">{tool.record}</Tool>
            <Tool label="Stop macro">{tool.stop}</Tool>
            <Tool label="Edit macros">{tool.edit}</Tool>
            <Tool label="Run macro">{tool.play}</Tool>
            <Grip />
            <Tool label="Fit all">{tool.fit}</Tool>
            <Tool label="Draw style">{tool.style}</Tool>
            <MenuArrow aria-label="Draw style options" />
            <Divider />
            <Tool label="Axonometric"><Cube /></Tool>
            <Divider />
            <Tool label="Front"><Cube fill="dcgh" /></Tool>
            <Tool label="Top"><Cube fill="abcd" /></Tool>
            <Tool label="Right"><Cube fill="cbfg" /></Tool>
            <Divider />
            <Tool label="Rear"><Cube fill="abfe" /></Tool>
            <Tool label="Bottom"><Cube fill="efgh" /></Tool>
            <Tool label="Left"><Cube fill="adhe" /></Tool>
            <Divider />
            <Tool label="Measure">{tool.ruler}</Tool>
          </Toolbar>
          <Toolbar $height={36} role="toolbar" aria-label="Navigation">
            <Grip />
            <Tool label="Open website">{tool.globe}</Tool>
            <Divider />
            <Tool label="Previous page"><NavArrow /></Tool>
            <Tool label="Next page"><NavArrow flip /></Tool>
            <Tool label="Reload page"><Swirl tone="#bcbbb9" /></Tool>
            <Tool label="Stop loading">{tool.halt}</Tool>
            <Divider />
            <Tool label="Zoom in">{tool.plus}</Tool>
            <Tool label="Zoom out">{tool.minus}</Tool>
          </Toolbar>

          <Workspace>
            <Combo>
              <ComboHead>
                <ComboTitle>Combo View</ComboTitle>
                <DockButton aria-label="Float panel">
                  <svg width="7" height="7" viewBox="0 0 7 7" fill="none" stroke="#55544f"><path d="M2.500 0.500H6.500V4.500H2.500ZM0.500 2.500V6.500H4.500" /></svg>
                </DockButton>
                <DockButton aria-label="Close panel">
                  <svg width="7" height="7" viewBox="0 0 7 7" stroke="#44433f" strokeWidth="1.600"><path d="M0.500 0.500L6.500 6.500M6.500 0.500L0.500 6.500" /></svg>
                </DockButton>
              </ComboHead>
              <PanelTabs>
                <PanelTab $active>Model</PanelTab>
                <PanelTab>Tasks</PanelTab>
              </PanelTabs>
              <PanelFrame>
                <TreeBox>
                  <HeaderStrip>
                    <TreeHeader>Labels &amp; Attributes</TreeHeader>
                  </HeaderStrip>
                  <Tree>
                    <TreeRow $depth={0}>Application</TreeRow>
                    <TreeRow $depth={1} $tone="bold">
                      <svg width="8" height="8" viewBox="0 0 8 8"><path d="M1 1H7L4 7Z" fill="#5a5956" stroke="#2c2b29" strokeWidth="0.800" /></svg>
                      <svg width="12" height="15" viewBox="0 0 12 15">
                        <path d="M1 1H8L11 4V14H1Z" fill="#ffffff" stroke="#555555" />
                        <path d="M3 4H7M3 6.500H9" stroke="#555555" />
                        <circle cx="4.500" cy="10.500" r="2" fill="#19bcc8" /><path d="M6 10.500H10" stroke="#a324a8" strokeWidth="2" />
                      </svg>
                      battery-AAA
                    </TreeRow>
                    <TreeRow $depth={2} $tone="dim">
                      <svg width="8" height="8" viewBox="0 0 8 8"><path d="M1 1V7L7 4Z" fill="#5a5956" stroke="#2c2b29" strokeWidth="0.800" /></svg>
                      <svg width="13" height="12" viewBox="0 0 13 12"><path d="M1 4L5 1L12 1.500L11 5L8 6L12 8L11 11L4 11.500L1 9Z" fill="#9b9a98" /><path d="M2 4L8 4.500L11 2" stroke="#d5d4d2" fill="none" /></svg>
                      Chamfer001
                    </TreeRow>
                    <TreeRow $depth={2} $tone="bold">
                      <svg width="8" height="8" viewBox="0 0 8 8" />
                      <svg width="13" height="12" viewBox="0 0 13 12" stroke="#00003a" strokeWidth="0.800"><path d="M1 3L4 1H11.500V8.500L8.500 11.500L1 10.500Z" fill="#0a22e6" /><path d="M8.500 3.500L11.500 1V8.500L8.500 11.500Z" fill="#0816a0" /><path d="M1 3L8.500 3.500" /></svg>
                      Battery-AAA-final
                    </TreeRow>
                  </Tree>
                </TreeBox>
                <Splitter />
                <PropertyBox>
                  <PropertyTable>
                    <thead>
                      <tr><th scope="col">Property</th><th scope="col">Value</th></tr>
                    </thead>
                  </PropertyTable>
                </PropertyBox>
                <FootTabs>
                  <FootTab $width={43}>
                    <svg width="43" height="25" viewBox="0 0 43 25"><path d="M0.500 0L6 21Q7 24.500 10 24.500H33Q36 24.500 37 21L42.500 0" fill="#ffffff" stroke="#6e6d6a" /></svg>
                    <span>View</span>
                  </FootTab>
                  <FootTab $width={42}>
                    <svg width="42" height="25" viewBox="0 0 42 25"><path d="M1 1L7 20Q8 23.500 11 23.500H31Q34 23.500 35 20L41 1" fill="#f4f3f2" stroke="#6e6d6a" /></svg>
                    <span>Data</span>
                  </FootTab>
                </FootTabs>
              </PanelFrame>
            </Combo>

            <Documents>
              <DocumentArea>
                <WindowGrid>
                  <DocWindow><Viewport><FrontView /></Viewport></DocWindow>
                  <DocWindow><Viewport><TiltedTopView /></Viewport></DocWindow>
                  <TitledWindow title="battery-AAA : 2"><PoleView /></TitledWindow>
                  <TitledWindow title="battery-AAA : 1" active><TiltedBaseView /></TitledWindow>
                </WindowGrid>
                <DocTabs>
                  {[1, 2, 3, 4].map((n) => (
                    <DocTab key={n} $active={n === 1}>
                      <FreeCadMark size={15} />
                      <DocTabName>battery-AAA : {n}</DocTabName>
                      <CloseButton aria-label={`Close battery-AAA : ${n}`}>{CROSS}</CloseButton>
                    </DocTab>
                  ))}
                </DocTabs>
              </DocumentArea>
              <ScrollBar>
                <ScrollStep aria-label="Scroll up" />
                <ScrollTrack><ScrollThumb /></ScrollTrack>
                <ScrollStep $down aria-label="Scroll down" />
              </ScrollBar>
            </Documents>
          </Workspace>
          <StatusBar>64.25 x 46.85 mm</StatusBar>
        </Main>
      </Desktop>
    </Page>
  );
}
